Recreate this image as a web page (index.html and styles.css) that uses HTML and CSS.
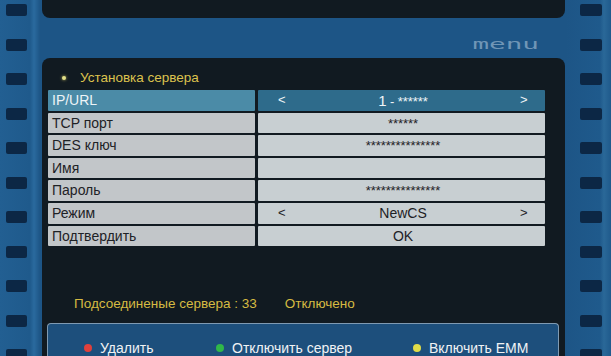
FILE: index.html
```html
<!DOCTYPE html>
<html lang="ru">
<head>
<meta charset="utf-8">
<title>Установка сервера</title>
<link rel="stylesheet" href="styles.css">
</head>
<body>
<div class="frame">
  <div class="strip strip-left">
    <i></i><i></i><i></i><i></i><i></i><i></i><i></i><i></i><i></i><i></i><i></i>
  </div>
  <div class="center">
    <div class="top-dark"></div>
    <div class="menubar"><span class="menu-word">menu</span></div>
    <div class="panel">
      <div class="heading"><span class="hdot"></span>Установка сервера</div>
      <div class="table">
        <div class="cell lbl sel">IP/URL</div>
        <div class="cell val sel"><span class="arr">&lt;</span><span class="v"><span class="one">1</span> - ******</span><span class="arr">&gt;</span></div>
        <div class="cell lbl">TCP порт</div>
        <div class="cell val"><span class="v">******</span></div>
        <div class="cell lbl">DES ключ</div>
        <div class="cell val"><span class="v">***************</span></div>
        <div class="cell lbl">Имя</div>
        <div class="cell val"><span class="v"></span></div>
        <div class="cell lbl">Пароль</div>
        <div class="cell val"><span class="v">***************</span></div>
        <div class="cell lbl">Режим</div>
        <div class="cell val"><span class="arr">&lt;</span><span class="v txt">NewCS</span><span class="arr">&gt;</span></div>
        <div class="cell lbl">Подтвердить</div>
        <div class="cell val"><span class="v txt">OK</span></div>
      </div>
      <div class="status"><span>Подсоединеные сервера : 33</span><span>Отключено</span></div>
      <div class="keys">
        <div class="key"><span class="kdot red"></span>Удалить</div>
        <div class="key"><span class="kdot green"></span>Отключить сервер</div>
        <div class="key"><span class="kdot yellow"></span>Включить EMM</div>
      </div>
    </div>
  </div>
  <div class="strip strip-right">
    <i></i><i></i><i></i><i></i><i></i><i></i><i></i><i></i><i></i><i></i><i></i>
  </div>
</div>
</body>
</html>
```
FILE: styles.css
```css
html, body {
  margin: 0;
  padding: 0;
  width: 611px;
  height: 356px;
  overflow: hidden;
  background: #1f5a8c;
  font-family: "Liberation Sans", Arial, sans-serif;
}
.frame {
  display: grid;
  grid-template-columns: 42px 523px 46px;
  height: 356px;
  background: linear-gradient(90deg, #225f92 0px, #1f5a8c 30px, #2a6a9e 34px, #1d5586 40px, #1d5586 566px, #1f5a8c 600px, #2a6898 604px, #1f5a8c 611px);
}
.strip {
  display: flex;
  flex-direction: column;
  gap: 22.5px;
  padding-top: 4px;
}
.strip i {
  display: block;
  height: 12px;
  width: 21px;
  background: #0c2745;
  border-radius: 2px;
  flex: none;
}
.strip-left { padding-left: 6px; }
.strip-right { padding-left: 15px; }
.strip-right i { width: 22px; }
.center {
  display: flex;
  flex-direction: column;
}
.top-dark {
  height: 18px;
  background: #111a21;
  border-radius: 0 0 8px 8px;
  flex: none;
}
.menubar {
  height: 40px;
  flex: none;
  display: flex;
  justify-content: flex-end;
  align-items: center;
  padding-right: 26px;
}
.menu-word {
  font-family: "DejaVu Sans Mono", monospace;
  font-size: 12px;
  letter-spacing: 0;
  color: #7096b6;
  display: inline-block;
  transform: scale(2.3, 1.1);
  transform-origin: right center;
  margin-top: 14px;
}
.panel {
  flex: 1;
  background: #111a21;
  border-radius: 8px 8px 0 0;
  display: flex;
  flex-direction: column;
}
.heading {
  margin-top: 12px;
  height: 16px;
  line-height: 16px;
  font-size: 13.5px;
  color: #dcc24e;
  display: flex;
  align-items: center;
  padding-left: 20px;
}
.hdot {
  width: 4px;
  height: 4px;
  border-radius: 50%;
  background: #e2e08a;
  box-shadow: 0 0 3px #c8c060;
  margin-right: 14px;
}
.table {
  margin-top: 4px;
  margin-left: 6px;
  width: 497px;
  display: grid;
  grid-template-columns: 207px 287px;
  grid-auto-rows: 20.6px;
  column-gap: 3px;
  row-gap: 2px;
}
.cell {
  font-size: 14px;
  line-height: 20.6px;
  color: #1e2226;
  white-space: nowrap;
}
.lbl {
  background: #c2c6c9;
  padding-left: 4px;
  border-radius: 1px;
}
.val {
  background: #c8cfd2;
  display: flex;
  align-items: center;
  padding: 0 17px 0 20px;
  border-radius: 1px;
}
.lbl.sel {
  background: #4b8ba7;
  color: #eef4f7;
}
.val.sel {
  background: #2e6b8b;
  color: #eef4f7;
}
.val .v {
  flex: 1;
  text-align: center;
  font-size: 13px;
  letter-spacing: -0.1px;
  padding-top: 2px;
}
.val .v.txt {
  font-size: 14px;
  letter-spacing: 0;
  padding-top: 0;
}
.val .one {
  font-size: 15px;
}
.arr {
  font-size: 13px;
  width: 8px;
}
.status {
  margin-top: 50px;
  padding-left: 32px;
  display: flex;
  gap: 28px;
  font-size: 13.5px;
  line-height: 16px;
  color: #d6ba42;
}
.keys {
  margin-top: 11px;
  margin-left: 5px;
  width: 512px;
  flex: 1;
  box-sizing: border-box;
  background: #1d4f7c;
  border: 1px solid #7f9ab2;
  border-bottom: none;
  border-radius: 4px 4px 0 0;
  display: grid;
  grid-template-columns: 132px 197px auto;
  padding: 16px 0 0 36px;
}
.key {
  display: flex;
  align-items: center;
  font-size: 14px;
  line-height: 16px;
  height: 16px;
  color: #f0f2f4;
}
.kdot {
  width: 8px;
  height: 8px;
  border-radius: 50%;
  margin-right: 8px;
}
.red { background: #e0403c; }
.green { background: #30b848; }
.yellow { background: #e0dc48; }
```
